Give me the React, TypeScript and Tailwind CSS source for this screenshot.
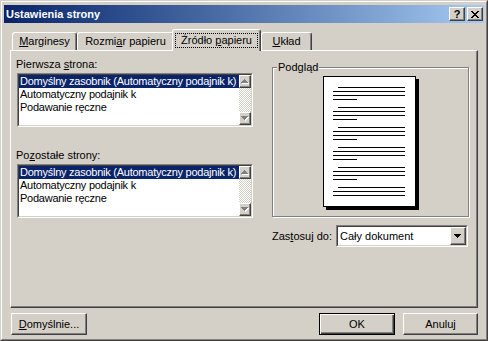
import React from "react";

// classic win2k bevels
const raised =
  "border border-t-white border-l-white border-r-[#404040] border-b-[#404040] shadow-[inset_-1px_-1px_0_#808080]";
const sunkenOuter = "border border-t-[#808080] border-l-[#808080] border-r-white border-b-white";
const sunkenInner = "border border-t-[#404040] border-l-[#404040] border-r-[#d4d0c8] border-b-[#d4d0c8]";

const Mn = ({ children }: { children: React.ReactNode }) => <span className="underline">{children}</span>;

type Row = [number, number, number];

function Arrow({ dir, disabled }: { dir: "up" | "down"; disabled?: boolean }) {
  const rows: Row[] =
    dir === "up"
      ? [[3, 0, 1], [2, 1, 3], [1, 2, 5], [0, 3, 7]]
      : [[0, 0, 7], [1, 1, 5], [2, 2, 3], [3, 3, 1]];
  return (
    <svg width="8" height="5" shapeRendering="crispEdges">
      {disabled &&
        rows.map(([x, y, w]) => <rect key={"s" + y} x={x + 1} y={y + 1} width={w} height={1} fill="#fff" />)}
      {rows.map(([x, y, w]) => (
        <rect key={y} x={x} y={y} width={w} height={1} fill={disabled ? "#808080" : "#000"} />
      ))}
    </svg>
  );
}

function ScrollBar() {
  return (
    <div className="w-[12px] h-full flex flex-col">
      <div className={`h-[13px] bg-[#d4d0c8] flex items-center justify-center ${raised}`}>
        <Arrow dir="up" disabled />
      </div>
      <div className="flex-1 bg-[image:repeating-conic-gradient(#fff_0%_25%,#d4d0c8_0%_50%)] bg-[length:2px_2px]" />
      <div className={`h-[13px] bg-[#d4d0c8] flex items-center justify-center ${raised}`}>
        <Arrow dir="down" disabled />
      </div>
    </div>
  );
}

function ListBox() {
  const items = ["Domyślny zasobnik (Automatyczny podajnik k)", "Automatyczny podajnik k", "Podawanie ręczne"];
  return (
    <div className={`w-[236px] h-[54px] ${sunkenOuter}`}>
      <div className={`h-full flex bg-white ${sunkenInner}`}>
        <div className="flex-1 min-w-0 overflow-hidden tracking-[-0.25px]">
          {items.map((t, i) => (
            <div
              key={t}
              className={`h-[13px] pl-[1px] whitespace-nowrap ${i === 0 ? "bg-[#0a246a] text-white" : ""}`}
            >
              {t}
            </div>
          ))}
        </div>
        <ScrollBar />
      </div>
    </div>
  );
}

function PagePreview() {
  const lines: { x: number; y: number; w: number }[] = [];
  for (let g = 0; g < 6; g++) {
    const y0 = 10 + g * 20;
    lines.push({ x: 14, y: y0, w: 67 });
    lines.push({ x: 9, y: y0 + 4, w: 72 });
    lines.push({ x: 9, y: y0 + 8, w: 72 });
    if (g < 5) lines.push({ x: 9, y: y0 + 12, w: 24 });
  }
  return (
    <div className="w-[93px] h-[131px] bg-white border border-black shadow-[3px_3px_0_#000]">
      <svg width="91" height="129" shapeRendering="crispEdges">
        {lines.map((l, i) => (
          <rect key={i} x={l.x} y={l.y} width={l.w} height={1} fill="#000" />
        ))}
      </svg>
    </div>
  );
}

function Tab({ w, selected, children }: { w: string; selected?: boolean; children: React.ReactNode }) {
  if (selected) {
    return (
      <div
        className={`${w} h-[22px] -mb-px -ml-[2px] relative z-10 bg-[#d4d0c8] rounded-t-[3px] border-l border-t border-r border-l-white border-t-white border-r-[#404040] shadow-[inset_-1px_0_0_#808080] flex items-center justify-center`}
      >
        <span className="border border-dotted border-black px-[5px]">{children}</span>
      </div>
    );
  }
  return (
    <div
      className={`${w} h-[18px] rounded-t-[3px] border-l border-t border-r border-l-white border-t-white border-r-[#404040] shadow-[inset_-1px_0_0_#808080] flex items-center justify-center`}
    >
      {children}
    </div>
  );
}

function XGlyph() {
  const rows: Row[] = [
    [0, 0, 2], [6, 0, 2],
    [1, 1, 2], [5, 1, 2],
    [2, 2, 4],
    [3, 3, 2],
    [2, 4, 4],
    [1, 5, 2], [5, 5, 2],
    [0, 6, 2], [6, 6, 2],
  ];
  return (
    <svg width="8" height="7" shapeRendering="crispEdges">
      {rows.map(([x, y, w], i) => (
        <rect key={i} x={x} y={y} width={w} height={1} fill="#000" />
      ))}
    </svg>
  );
}

export default function App() {
  return (
    <div
      className={`w-[488px] h-[341px] bg-[#d4d0c8] text-[11px] leading-[13px] text-black font-['Liberation_Sans',Arial,sans-serif] border border-t-[#d4d0c8] border-l-[#d4d0c8] border-r-[#404040] border-b-[#404040] overflow-hidden`}
    >
      <div className="h-full border border-t-white border-l-white border-r-[#808080] border-b-[#808080] px-[2px] pt-[3px] flex flex-col">
        {/* title bar */}
        <div className="h-[18px] flex items-center bg-linear-to-r from-[#0a246a] to-[#a6caf0] pl-[2px] pr-[1px]">
          <span className="flex-1 font-bold text-white">Ustawienia strony</span>
          <div className="flex gap-[2px]">
            <div className={`w-[16px] h-[14px] bg-[#d4d0c8] flex items-center justify-center font-bold leading-none ${raised}`}>
              ?
            </div>
            <div className={`w-[16px] h-[14px] bg-[#d4d0c8] flex items-center justify-center ${raised}`}>
              <XGlyph />
            </div>
          </div>
        </div>

        {/* tabs */}
        <div className="mt-[6px] ml-[8px] flex items-end">
          <Tab w="w-[65px]">
            <Mn>M</Mn>arginesy
          </Tab>
          <Tab w="w-[97px]">
            Rozmi<Mn>a</Mn>r papieru
          </Tab>
          <Tab w="w-[89px]" selected>
            Źródło <Mn>p</Mn>apieru
          </Tab>
          <Tab w="w-[51px]">
            <Mn>U</Mn>kład
          </Tab>
        </div>

        {/* tab page */}
        <div className="ml-[6px] w-[468px] h-[258px] border border-t-white border-l-white border-r-[#404040] border-b-[#404040] shadow-[inset_-1px_-1px_0_#808080] flex items-start pl-[6px] pt-[7px]">
          <div className="w-[236px] flex flex-col">
            <div className="-ml-px">
              Pierwsza <Mn>s</Mn>trona:
            </div>
            <div className="mt-[2px]">
              <ListBox />
            </div>
            <div className="-ml-px mt-[22px]">
              Po<Mn>z</Mn>ostałe strony:
            </div>
            <div className="mt-[2px]">
              <ListBox />
            </div>
          </div>

          <div className="ml-[19px] w-[197px] pt-[9px] flex flex-col">
            <div className="relative h-[150px] border border-[#808080] shadow-[inset_1px_1px_0_#fff,1px_1px_0_#fff] flex justify-center pt-[8px] pr-[2px]">
              <span className="absolute -top-[7px] left-[4px] px-[1px] bg-[#d4d0c8]">Podgląd</span>
              <PagePreview />
            </div>
            <div className="mt-[8px] flex items-center">
              <span className="w-[64px]">
                Zas<Mn>t</Mn>osuj do:
              </span>
              <div className={`w-[132px] h-[22px] ${sunkenOuter}`}>
                <div className={`h-full flex bg-white ${sunkenInner}`}>
                  <div className="flex-1 flex items-center pl-[2px]">Cały dokument</div>
                  <div className={`w-[16px] h-full bg-[#d4d0c8] flex items-center justify-center ${raised}`}>
                    <Arrow dir="down" />
                  </div>
                </div>
              </div>
            </div>
          </div>
        </div>

        {/* buttons */}
        <div className="mt-[5px] flex pl-[7px] pr-[6px]">
          <button className={`w-[76px] h-[22px] bg-[#d4d0c8] ${raised}`}>
            <Mn>D</Mn>omyślnie...
          </button>
          <button className="ml-auto w-[76px] h-[22px] bg-[#d4d0c8] border border-black shadow-[inset_1px_1px_0_#fff,inset_-1px_-1px_0_#404040,inset_-2px_-2px_0_#808080]">
            OK
          </button>
          <button className={`ml-[8px] w-[75px] h-[22px] bg-[#d4d0c8] ${raised}`}>Anuluj</button>
        </div>
      </div>
    </div>
  );
}
